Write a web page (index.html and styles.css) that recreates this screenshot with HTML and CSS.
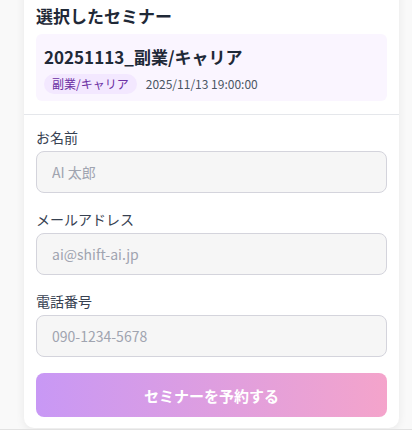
FILE: index.html
```html
<!DOCTYPE html>
<html lang="ja">
<head>
<meta charset="utf-8">
<title>セミナー予約</title>
<link rel="stylesheet" href="styles.css">
</head>
<body>
<main class="page">
  <section class="card">
    <div class="selected">
      <h2 class="selected-title">選択したセミナー</h2>
      <div class="seminar">
        <div class="seminar-name">20251113_副業/キャリア</div>
        <div class="seminar-meta">
          <span class="badge">副業/キャリア</span>
          <span class="date">2025/11/13 19:00:00</span>
        </div>
      </div>
    </div>
    <form class="form">
      <label class="field">
        <span class="label">お名前</span>
        <input class="input" type="text" placeholder="AI 太郎">
      </label>
      <label class="field">
        <span class="label">メールアドレス</span>
        <input class="input" type="email" placeholder="ai@shift-ai.jp">
      </label>
      <label class="field">
        <span class="label">電話番号</span>
        <input class="input" type="tel" placeholder="090-1234-5678">
      </label>
      <button class="submit" type="button">セミナーを予約する</button>
    </form>
  </section>
  <div class="rule"></div>
</main>
</body>
</html>
```
FILE: styles.css
```css
* { box-sizing: border-box; }
html, body { margin: 0; padding: 0; }
body {
  background: #f9f9f9;
  font-family: "Noto Sans CJK JP", "Noto Sans", sans-serif;
  color: #1f2937;
  overflow: hidden;
}
.page {
  display: flex;
  flex-direction: column;
  height: 430px;
}
.card {
  margin: -12px 13px 0 24px;
  background: #ffffff;
  border-radius: 0 0 10px 10px;
  box-shadow: 0 2px 10px rgba(0, 0, 0, 0.07);
}
.selected {
  padding: 16px 12px 13px;
  border-bottom: 1px solid #e5e7eb;
}
.selected-title {
  margin: 0 0 7px;
  font-size: 17px;
  line-height: 23px;
  font-weight: 700;
  color: #1f2937;
}
.seminar {
  background: #faf5ff;
  border-radius: 6px;
  padding: 12px 8px 7px;
}
.seminar-name {
  font-size: 17px;
  line-height: 22px;
  font-weight: 700;
  color: #1f2937;
}
.seminar-meta {
  display: flex;
  align-items: center;
  gap: 9px;
  margin-top: 6px;
}
.badge {
  background: #f3e8ff;
  color: #6b2fa3;
  font-size: 12px;
  line-height: 20px;
  padding: 0 8px;
  border-radius: 10px;
}
.date {
  font-size: 12px;
  line-height: 20px;
  color: #4b5563;
}
.form {
  display: flex;
  flex-direction: column;
  gap: 16px;
  padding: 12px 12px 11px;
}
.field {
  display: flex;
  flex-direction: column;
  gap: 3px;
}
.label {
  font-size: 14px;
  line-height: 21px;
  color: #374151;
}
.input {
  height: 42px;
  width: 100%;
  border: 1px solid #d4d4dc;
  border-radius: 8px;
  background: #f6f6f6;
  padding: 0 15px;
  font-family: inherit;
  font-size: 14px;
  color: #1f2937;
  outline: none;
}
.input::placeholder { color: #a0a4b0; }
.submit {
  height: 44px;
  border: none;
  border-radius: 8px;
  background: linear-gradient(90deg, #c898f5 0%, #f4a4cb 100%);
  color: #ffffff;
  font-family: inherit;
  font-size: 15px;
  font-weight: 700;
  cursor: pointer;
}
.rule {
  margin-top: 1px;
  height: 1px;
  background: #e2e2e2;
}
```
